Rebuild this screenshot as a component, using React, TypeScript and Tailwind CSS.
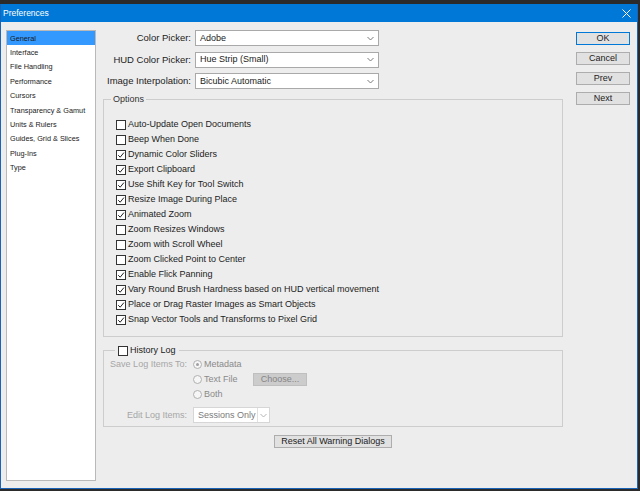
import React from 'react';

function Check({ checked }: { checked: boolean }) {
  return (
    <span className="w-[10px] h-[10px] border border-[#333333] bg-white flex items-center justify-center shrink-0">
      {checked && (
        <svg width="8" height="8" viewBox="0 0 8 8">
          <path d="M1.2 4.2 L3.2 6.2 L6.9 1.6" fill="none" stroke="#222" strokeWidth="1" />
        </svg>
      )}
    </span>
  );
}

function Chevron({ color = '#7a7a7a' }: { color?: string }) {
  return (
    <svg width="7" height="5" viewBox="0 0 7 5">
      <path d="M0.5 1 L3.5 4 L6.5 1" fill="none" stroke={color} strokeWidth="1" />
    </svg>
  );
}

function Radio({ selected }: { selected?: boolean }) {
  return (
    <span className="w-[9px] h-[9px] rounded-full border border-[#b0b0b0] bg-[#f6f6f6] flex items-center justify-center shrink-0">
      {selected && <span className="w-[3px] h-[3px] rounded-full bg-[#a0a0a0]" />}
    </span>
  );
}

const sideItems = [
  'General',
  'Interface',
  'File Handling',
  'Performance',
  'Cursors',
  'Transparency & Gamut',
  'Units & Rulers',
  'Guides, Grid & Slices',
  'Plug-Ins',
  'Type',
];

const options: [string, boolean][] = [
  ['Auto-Update Open Documents', false],
  ['Beep When Done', false],
  ['Dynamic Color Sliders', true],
  ['Export Clipboard', true],
  ['Use Shift Key for Tool Switch', true],
  ['Resize Image During Place', true],
  ['Animated Zoom', true],
  ['Zoom Resizes Windows', false],
  ['Zoom with Scroll Wheel', false],
  ['Zoom Clicked Point to Center', false],
  ['Enable Flick Panning', true],
  ['Vary Round Brush Hardness based on HUD vertical movement', true],
  ['Place or Drag Raster Images as Smart Objects', true],
  ['Snap Vector Tools and Transforms to Pixel Grid', true],
];

const selects: [string, string][] = [
  ['Color Picker:', 'Adobe'],
  ['HUD Color Picker:', 'Hue Strip (Small)'],
  ['Image Interpolation:', 'Bicubic Automatic'],
];

export default function App() {
  return (
    <div className="w-[640px] h-[491px] bg-[#2b2b2b] pt-[4px] overflow-hidden font-['Liberation_Sans',Arial,sans-serif] text-[#222222]">
      <div className="w-[638px] h-[485px] border-x border-b border-[#1a64b8] flex flex-col bg-[#ededed]">
        {/* Title bar */}
        <div className="h-[18px] bg-[#0078d7] flex items-center justify-between pl-[2px] pr-[6px] shrink-0">
          <span className="text-white text-[8.5px] leading-none">Preferences</span>
          <svg width="9" height="9" viewBox="0 0 9 9">
            <path d="M0.5 0.5 L8.5 8.5 M8.5 0.5 L0.5 8.5" stroke="#ffffff" strokeWidth="1" />
          </svg>
        </div>

        {/* Body */}
        <div className="flex flex-row flex-1">
          {/* Sidebar */}
          <div className="ml-[5px] mt-[8px] w-[90px] h-[451px] border border-[#b9b9b9] bg-white flex flex-col">
            {sideItems.map((s, i) => (
              <div
                key={s}
                className={`h-[14.4px] flex items-center pl-[3px] text-[7.3px] leading-none whitespace-nowrap text-[#1a1a1a] ${
                  i === 0 ? 'bg-[#3399ff]' : ''
                }`}
              >
                {s}
              </div>
            ))}
          </div>

          {/* Main column */}
          <div className="ml-[7px] w-[460px] flex flex-col">
            <div className="mt-[8px] flex flex-col gap-[5.5px]">
              {selects.map(([label, val]) => (
                <div key={label} className="flex items-center h-[16px]">
                  <span className="w-[88px] text-right text-[9.5px] leading-none whitespace-nowrap">{label}</span>
                  <div className="ml-[4px] w-[184px] h-full border border-[#a9a9a9] bg-white flex items-center justify-between pl-[4px] pr-[4px]">
                    <span className="text-[9px] leading-none">{val}</span>
                    <Chevron />
                  </div>
                </div>
              ))}
            </div>

            {/* Options group */}
            <fieldset className="mt-[4px] border border-[#cdcdcd] min-w-0">
              <legend className="ml-[7px] px-[2px] text-[9px] leading-[12px] text-[#333]">Options</legend>
              <div className="pt-[12px] pb-[9px] pl-[12px] flex flex-col">
                {options.map(([label, checked]) => (
                  <div key={label} className="h-[15px] flex items-center">
                    <Check checked={checked} />
                    <span className="ml-[2px] text-[9px] leading-none whitespace-nowrap">{label}</span>
                  </div>
                ))}
              </div>
            </fieldset>

            {/* History Log group */}
            <fieldset className="mt-[7px] border border-[#cdcdcd] min-w-0">
              <legend className="ml-[11px] px-[3px] leading-[12px]">
                <span className="inline-flex items-center align-middle">
                  <Check checked={false} />
                  <span className="ml-[2px] text-[9px] leading-none">History Log</span>
                </span>
              </legend>
              <div className="flex flex-col pt-[1px] pb-[3px]">
                <div className="h-[15px] flex items-center">
                  <span className="w-[83px] text-right text-[9px] leading-none text-[#a6a6a6] whitespace-nowrap">Save Log Items To:</span>
                  <span className="ml-[6px] flex items-center">
                    <Radio selected />
                    <span className="ml-[2px] text-[9px] leading-none text-[#8a8a8a]">Metadata</span>
                  </span>
                </div>
                <div className="h-[15px] flex items-center">
                  <span className="w-[83px]" />
                  <span className="ml-[6px] w-[60px] flex items-center">
                    <Radio />
                    <span className="ml-[2px] text-[9px] leading-none text-[#8a8a8a]">Text File</span>
                  </span>
                  <div className="w-[54px] h-[13px] bg-[#cccccc] border border-[#bfbfbf] flex items-center justify-center text-[9px] leading-none text-[#858585]">
                    Choose...
                  </div>
                </div>
                <div className="h-[15px] flex items-center">
                  <span className="w-[83px]" />
                  <span className="ml-[6px] flex items-center">
                    <Radio />
                    <span className="ml-[2px] text-[9px] leading-none text-[#8a8a8a]">Both</span>
                  </span>
                </div>
                <div className="mt-[5px] h-[16px] flex items-center">
                  <span className="w-[83px] text-right text-[9px] leading-none text-[#a6a6a6] whitespace-nowrap">Edit Log Items:</span>
                  <div className="ml-[6px] w-[77px] h-full border border-[#d6d6d6] bg-white flex items-center">
                    <span className="w-[63px] pl-[4px] text-[9px] leading-none text-[#7a7a7a] whitespace-nowrap">Sessions Only</span>
                    <span className="flex-1 h-full border-l border-[#e0e0e0] flex items-center justify-center">
                      <Chevron color="#b5b5b5" />
                    </span>
                  </div>
                </div>
              </div>
            </fieldset>

            <div className="mt-[8px] self-center w-[118px] h-[13px] bg-[#e1e1e1] border border-[#adadad] flex items-center justify-center text-[9px] leading-none">
              Reset All Warning Dialogs
            </div>
          </div>

          {/* Buttons column */}
          <div className="ml-[13px] mt-[10px] w-[54px] flex flex-col gap-[7px]">
            {['OK', 'Cancel', 'Prev', 'Next'].map((b, i) => (
              <div
                key={b}
                className={`h-[13px] bg-[#e1e1e1] border flex items-center justify-center text-[9px] leading-none ${
                  i === 0 ? 'border-[#0078d7]' : 'border-[#adadad]'
                }`}
              >
                {b}
              </div>
            ))}
          </div>
        </div>
      </div>
    </div>
  );
}
